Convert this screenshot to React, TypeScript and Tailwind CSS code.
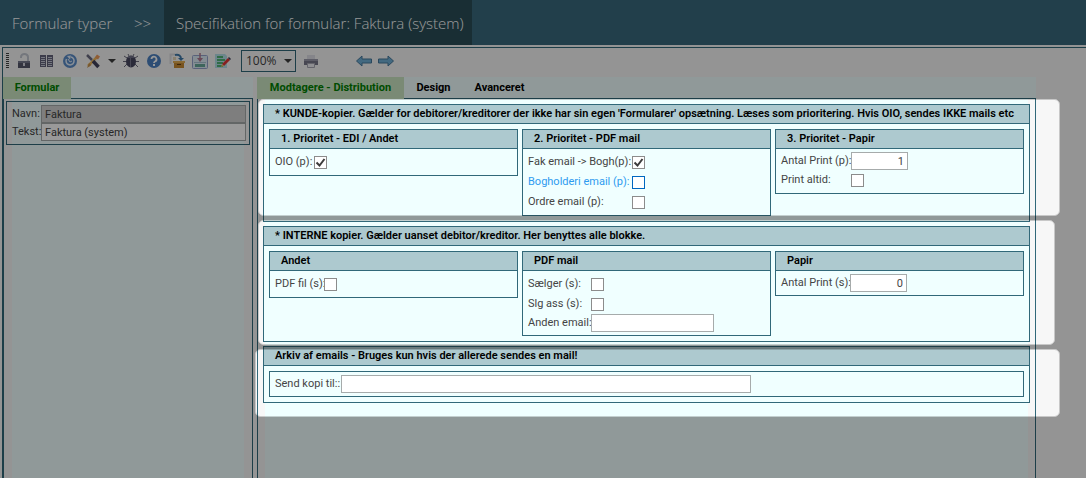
import type { ReactNode } from "react";

type Field = {
  id: string;
  label: string;
  kind: "check" | "text" | "number";
  checked?: boolean;
  value?: string;
  width?: string;
  active?: boolean;
};

type Box = {
  title: string;
  labelWidth: string;
  fields: Field[];
};

const customerBoxes: Box[] = [
  {
    title: "1. Prioritet - EDI / Andet",
    labelWidth: "w-[39px]",
    fields: [{ id: "oio", label: "OIO (p):", kind: "check", checked: true }],
  },
  {
    title: "2. Prioritet - PDF mail",
    labelWidth: "w-[104px]",
    fields: [
      { id: "fak-email", label: "Fak email -> Bogh(p):", kind: "check", checked: true },
      { id: "bogholderi", label: "Bogholderi email (p):", kind: "check", active: true },
      { id: "ordre", label: "Ordre email (p):", kind: "check" },
    ],
  },
  {
    title: "3. Prioritet - Papir",
    labelWidth: "w-[70px]",
    fields: [
      { id: "antal-p", label: "Antal Print (p):", kind: "number", value: "1", width: "w-[57px]" },
      { id: "print-altid", label: "Print altid:", kind: "check" },
    ],
  },
];

const internalBoxes: Box[] = [
  {
    title: "Andet",
    labelWidth: "w-[49px]",
    fields: [{ id: "pdf-fil", label: "PDF fil (s):", kind: "check" }],
  },
  {
    title: "PDF mail",
    labelWidth: "w-[63px]",
    fields: [
      { id: "saelger", label: "Sælger (s):", kind: "check" },
      { id: "slg-ass", label: "Slg ass (s):", kind: "check" },
      { id: "anden-email", label: "Anden email:", kind: "text", width: "w-[123px]" },
    ],
  },
  {
    title: "Papir",
    labelWidth: "w-[69px]",
    fields: [
      { id: "antal-s", label: "Antal Print (s):", kind: "number", value: "0", width: "w-[57px]" },
    ],
  },
];

const tools: { name: string; icon: ReactNode }[] = [
  {
    name: "Lås op",
    icon: (
      <>
        <path d="M5 5V4a3.500 3 0 0 1 7 0v5" fill="none" stroke="#c2c6d0" strokeWidth="2" />
        <rect x="2" y="8" width="12" height="7" fill="#55586c" />
        <path d="M2 8h12v2H2z" fill="#777b8e" />
        <rect x="7" y="10" width="2" height="3" fill="#d4d4de" />
      </>
    ),
  },
  {
    name: "Liste",
    icon: (
      <>
        <path d="M1 2h6v12H1zM8 2h6v12H8z" fill="#65657c" />
        <path
          d="M2 4.500h4M2 6.500h4M2 8.500h4M2 10.500h4M2 12.500h4M9 4.500h4M9 6.500h4M9 8.500h4M9 10.500h4M9 12.500h4"
          stroke="#c5c8d6"
        />
      </>
    ),
  },
  {
    name: "Opdater",
    icon: (
      <>
        <circle cx="8" cy="8" r="7" fill="#5b8dc9" />
        <path d="M4.500 6a4 4 0 1 0 4.500-2" fill="none" stroke="#e4effb" strokeWidth="1.500" />
        <path d="M5 3l4-.5-1 4z" fill="#e4effb" />
        <path d="M6 6l2 3 2-1" fill="none" stroke="#e4effb" />
      </>
    ),
  },
  {
    name: "Værktøj",
    icon: (
      <>
        <path d="M13 3L3 13" stroke="#f0b95c" strokeWidth="2.500" />
        <path d="M12 1.500l3 2-2 3-3-2z" fill="#ef9b5a" />
        <path d="M4 10l2.500 2L2 15z" fill="#c79350" />
        <path d="M2 2l5 5" stroke="#6c6c80" strokeWidth="2.500" />
        <path d="M8 8l5.500 6" stroke="#40405a" strokeWidth="3.500" />
      </>
    ),
  },
];

const moreTools: { name: string; icon: ReactNode }[] = [
  {
    name: "Fejlsøg",
    icon: (
      <>
        <path
          d="M1 3l3 2M0 8.500h4M1 14l3-3M15 3l-3 2M16 8.500h-4M15 14l-3-3M5 1l1 2M11 1l-1 2"
          stroke="#6b6b7c"
          fill="none"
        />
        <ellipse cx="8" cy="8.500" rx="5" ry="6" fill="#474760" />
        <path d="M4 5c2-3 6-3 8 0z" fill="#707088" />
        <path d="M7.500 5v9" stroke="#77778d" />
      </>
    ),
  },
  {
    name: "Hjælp",
    icon: (
      <>
        <circle cx="8" cy="8" r="7" fill="#4c80c2" />
        <path
          d="M5.500 6a2.500 2.500 0 1 1 3.500 2.500c-.8.400-1 .7-1 1.500"
          fill="none"
          stroke="#fff"
          strokeWidth="1.800"
        />
        <rect x="7" y="11" width="2" height="2" fill="#fff" />
      </>
    ),
  },
  {
    name: "Pak ud",
    icon: (
      <>
        <path d="M1.500 11V1.500H6" fill="none" stroke="#dcdce0" strokeWidth="2" />
        <path d="M4 4h3v3H4z" fill="#e4d6b8" />
        <path d="M6 2c4-1 6 1 6 4" fill="none" stroke="#3f78a8" strokeWidth="2" />
        <path d="M9 5h6l-3 3z" fill="#3f78a8" />
        <path d="M5 9h10v6H5z" fill="#c98a32" />
        <path d="M4 8h12v2H4z" fill="#e3ad54" />
        <path d="M8 11.500h4" stroke="#68400f" />
      </>
    ),
  },
  {
    name: "Gem",
    icon: (
      <>
        <rect x="0.500" y="2.500" width="15" height="13" rx="1" fill="#dcecf5" stroke="#94a2cc" />
        <path d="M3 11h10v3H3z" fill="#68a99a" />
        <path d="M2 9.500h12" stroke="#a9c4d4" />
        <path d="M8 0v7" stroke="#b0788f" strokeWidth="1.500" />
        <path d="M5 5h6L8 9z" fill="#b0788f" />
      </>
    ),
  },
  {
    name: "Rediger",
    icon: (
      <>
        <path d="M0 1h10l2 2v12H0z" fill="#b5e0ea" />
        <path d="M2 4h6M2 7h8M2 10h6M2 13h6" stroke="#2fa552" strokeWidth="1.500" />
        <path d="M13 5l2 2-6 6-2-2z" fill="#df3434" />
        <path d="M7 11l2 2-3 1z" fill="#f0bc62" />
        <path d="M13 5l1-1 2 2-1 1z" fill="#40405c" />
      </>
    ),
  },
];

const ToolButton = ({ name, icon }: { name: string; icon: ReactNode }) => (
  <button type="button" aria-label={name} className="h-4 w-4">
    <svg viewBox="0 0 16 16" className="h-4 w-4">
      {icon}
    </svg>
  </button>
);

const Caret = () => (
  <svg viewBox="0 0 8 4" className="pointer-events-none h-1 w-2">
    <path d="M0 0h8L4 4z" fill="#3c3c3c" />
  </svg>
);

const Check = ({ field }: { field: Field }) => (
  <span className="grid h-[13px] w-[13px]">
    <input
      id={field.id}
      type="checkbox"
      defaultChecked={field.checked}
      className={`peer col-start-1 row-start-1 h-[13px] w-[13px] appearance-none border bg-white ${
        field.active ? "border-[#0067c0]" : "border-[#8c8c8c]"
      }`}
    />
    <svg
      viewBox="0 0 13 13"
      className="pointer-events-none invisible col-start-1 row-start-1 h-[13px] w-[13px] peer-checked:visible"
    >
      <path d="M2.500 6.500l3 3 5-6.500" fill="none" stroke="#3c3c3c" strokeWidth="2" />
    </svg>
  </span>
);

const FieldRow = ({ field, labelWidth }: { field: Field; labelWidth: string }) => (
  <div className={`flex items-center ${field.kind === "check" ? "h-5" : "h-[18px]"}`}>
    <label
      htmlFor={field.id}
      className={`shrink-0 whitespace-nowrap ${labelWidth} ${field.active ? "text-[#2e9bf0]" : ""}`}
    >
      {field.label}
    </label>
    {field.kind === "check" ? (
      <Check field={field} />
    ) : (
      <input
        id={field.id}
        type="text"
        defaultValue={field.value}
        className={`h-[18px] border border-[#a6abab] bg-white px-[3px] ${field.width} ${
          field.kind === "number" ? "text-right" : ""
        }`}
      />
    )}
  </div>
);

const Section = ({ title, children }: { title: string; children: ReactNode }) => (
  <section className="border border-[#316879] bg-[#f0ffff]">
    <h2 className="h-[19px] overflow-hidden border-b border-[#316879] bg-[#adc9cf] pl-[11px] leading-[18px] font-semibold whitespace-nowrap text-black">
      {title}
    </h2>
    <div className="p-[5px]">{children}</div>
  </section>
);

const BoxGrid = ({ boxes }: { boxes: Box[] }) => (
  <div className="grid grid-cols-3 items-start gap-1">
    {boxes.map((box) => (
      <div key={box.title} className="border border-[#316879]">
        <h3 className="h-[19px] border-b border-[#316879] bg-[#adc9cf] pl-[11px] leading-[18px] font-semibold text-black">
          {box.title}
        </h3>
        <div className="px-[5px] py-[3px]">
          {box.fields.map((field) => (
            <FieldRow key={field.id} field={field} labelWidth={box.labelWidth} />
          ))}
        </div>
      </div>
    ))}
  </div>
);

// Dims everything except the three highlighted sections
const Spotlight = () => (
  <svg className="pointer-events-none absolute inset-0 h-full w-full" aria-hidden="true">
    <mask id="holes">
      <rect width="100%" height="100%" fill="#fff" />
      <g fill="#000" stroke="#777">
        <rect x="258.500" y="99.500" width="801" height="116" rx="5" />
        <rect x="258.500" y="220.500" width="796" height="124" rx="5" />
        <rect x="255.500" y="349.500" width="804" height="67" rx="5" />
      </g>
    </mask>
    <rect width="100%" height="100%" fill="#000" fillOpacity="0.4" mask="url(#holes)" />
  </svg>
);

const App = () => {
  return (
    <div className="relative flex min-h-screen flex-col overflow-hidden bg-[#f7f7f7] font-[Roboto,'Noto_Sans',sans-serif] text-[11px] text-[#444]">
      <header className="flex h-[45px] items-stretch bg-[#3a6a7e] font-['Open_Sans','Noto_Sans',sans-serif] text-[15px] font-light text-white">
        <a href="#typer" className="flex w-[122px] items-center pt-0.5 pl-3 whitespace-nowrap">
          Formular typer
        </a>
        <span className="flex w-[42px] items-center pt-0.5 pl-3">&gt;&gt;</span>
        <h1 className="flex w-[308px] items-center bg-[#2a4e58] pt-0.5 pl-3 whitespace-nowrap">
          Specifikation for formular: Faktura (system)
        </h1>
      </header>

      <main className="mt-0.5 ml-0.5 flex flex-1 flex-col border-t border-l border-[#316879]">
        <div className="flex h-[29px] items-center pb-1 pl-[3px]">
          <span className="h-[15px] w-[3px] bg-[repeating-linear-gradient(#444_0_1px,transparent_1px_2px)]" />
          <div className="ml-[7px] flex gap-[7px]">
            {tools.map((tool) => (
              <ToolButton key={tool.name} {...tool} />
            ))}
          </div>
          <button type="button" aria-label="Flere værktøjer" className="ml-[7px]">
            <Caret />
          </button>
          <div className="ml-[7px] flex gap-[7px]">
            {moreTools.map((tool) => (
              <ToolButton key={tool.name} {...tool} />
            ))}
          </div>
          <div className="ml-2.5 grid h-[22px] w-[55px] items-center">
            <select
              aria-label="Zoom"
              className="col-start-1 row-start-1 h-[22px] w-full appearance-none border border-[#316879] pl-1 font-['Open_Sans','Noto_Sans',sans-serif] text-xs"
            >
              <option>100%</option>
            </select>
            <span className="pointer-events-none col-start-1 row-start-1 mr-1 justify-self-end">
              <Caret />
            </span>
          </div>
          <div className="ml-[7px] flex">
            <ToolButton
              name="Udskriv"
              icon={
                <>
                  <path d="M4 2h8v5H4z" fill="#dedee6" />
                  <path d="M1 6h14v6H1z" fill="#777789" />
                  <path d="M1 6h14v2H1z" fill="#9b9bac" />
                  <path d="M4.500 10.500h7v4h-7z" fill="#eeeef4" stroke="#a8a8b4" />
                </>
              }
            />
          </div>
          <div className="ml-[37px] flex gap-1.5">
            <ToolButton
              name="Tilbage"
              icon={<path d="M.5 8L6 3v3h9.500v4H6v3z" fill="#70b0d5" stroke="#47789c" />}
            />
            <ToolButton
              name="Frem"
              icon={<path d="M15.500 8L10 3v3H.5v4H10v3z" fill="#70b0d5" stroke="#47789c" />}
            />
          </div>
        </div>

        <div className="flex flex-1 gap-1">
          <aside className="flex w-[250px] shrink-0 flex-col">
            <div role="tablist" className="flex h-[22px]">
              <button
                type="button"
                role="tab"
                aria-selected="true"
                className="w-[68px] bg-[#cbe6c3] font-bold text-[#008000]"
              >
                Formular
              </button>
              <span className="flex-1 border-b border-[#316879] bg-[#f0ffff]" />
            </div>
            <div className="flex-1 border-x border-[#316879] bg-[linear-gradient(#f0ffff,#f0ffff)] bg-[length:calc(100%-16px)_100%] bg-center bg-no-repeat px-0.5 pt-0.5">
              <div className="border border-[#316879] py-[3px] pr-[3px] pl-[5px]">
                <div className="flex h-[18px] items-center">
                  <label htmlFor="navn" className="w-[29px] shrink-0 whitespace-nowrap">
                    Navn:
                  </label>
                  <input
                    id="navn"
                    readOnly
                    defaultValue="Faktura"
                    className="h-[18px] min-w-0 flex-1 border border-[#a6abab] bg-[#d2d2d2] px-[3px]"
                  />
                </div>
                <div className="flex h-[18px] items-center">
                  <label htmlFor="tekst" className="w-[29px] shrink-0 whitespace-nowrap">
                    Tekst:
                  </label>
                  <input
                    id="tekst"
                    defaultValue="Faktura (system)"
                    className="h-[18px] min-w-0 flex-1 border border-[#a6abab] bg-white px-[3px]"
                  />
                </div>
              </div>
            </div>
          </aside>

          <div className="mr-[50px] flex min-w-0 flex-1 flex-col">
            <div role="tablist" className="flex h-[22px] font-bold text-black">
              <button
                type="button"
                role="tab"
                aria-selected="true"
                className="w-[147px] bg-[#cbe6c3] text-[#008000]"
              >
                Modtagere - Distribution
              </button>
              <div className="flex flex-1 border-b border-[#316879] bg-[#f0ffff]">
                <button type="button" role="tab" aria-selected="false" className="w-[59px] pt-px">
                  Design
                </button>
                <button type="button" role="tab" aria-selected="false" className="w-[73px] pt-px">
                  Avanceret
                </button>
              </div>
            </div>
            <div className="flex flex-1 flex-col gap-1 border-x border-[#316879] bg-[linear-gradient(#f0ffff,#f0ffff)] bg-[length:calc(100%-14px)_100%] bg-center bg-no-repeat p-[5px]">
              <Section title="* KUNDE-kopier. Gælder for debitorer/kreditorer der ikke har sin egen 'Formularer' opsætning. Læses som prioritering. Hvis OIO, sendes IKKE mails etc">
                <BoxGrid boxes={customerBoxes} />
              </Section>
              <Section title="* INTERNE kopier. Gælder uanset debitor/kreditor. Her benyttes alle blokke.">
                <BoxGrid boxes={internalBoxes} />
              </Section>
              <Section title="Arkiv af emails - Bruges kun hvis der allerede sendes en mail!">
                <div className="border border-[#316879] px-[5px] py-[3px]">
                  <FieldRow
                    field={{ id: "send-kopi", label: "Send kopi til::", kind: "text", width: "w-[410px]" }}
                    labelWidth="w-[66px]"
                  />
                </div>
              </Section>
            </div>
          </div>
        </div>
      </main>

      <Spotlight />
    </div>
  );
};

export default App;
